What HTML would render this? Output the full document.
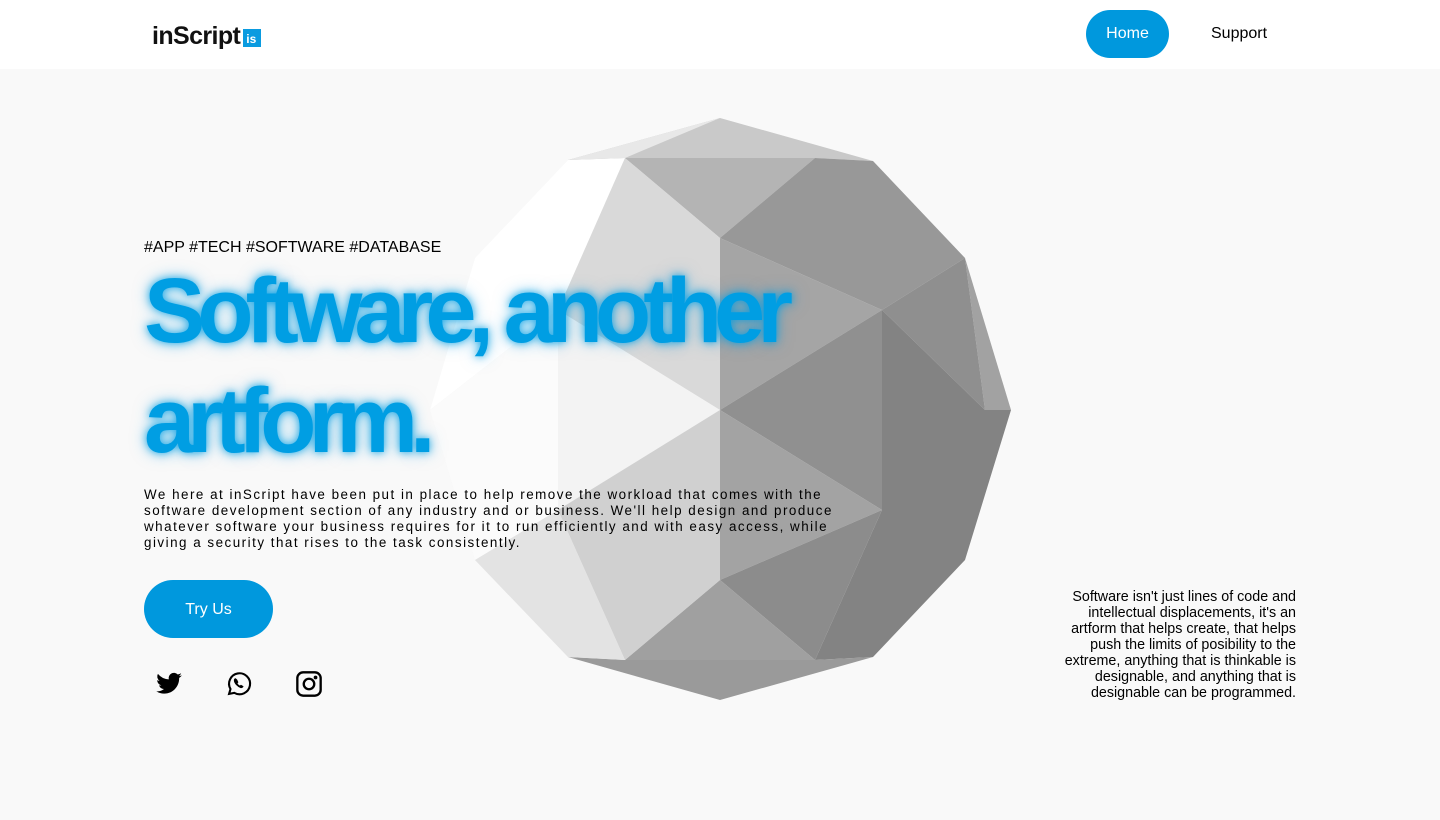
<!DOCTYPE html>
<html><head><meta charset="utf-8"><style>
*{margin:0;padding:0;box-sizing:border-box}
body{width:1440px;height:820px;background:#f9f9f9;font-family:"Liberation Sans",Arial,sans-serif;position:relative;overflow:hidden}
header{position:absolute;top:0;left:0;width:1440px;height:69px;background:#fff}
.logo{position:absolute;left:152px;top:22px;font-weight:bold;font-size:25px;letter-spacing:-0.6px;color:#111;font-family:"Liberation Sans",sans-serif}
.logo .is{display:inline-block;background:#0a9be0;color:#fff;font-size:12px;padding:0 3px;width:18px;height:18px;line-height:20px;vertical-align:1px;margin-left:3px;letter-spacing:0}
.home{position:absolute;left:1086px;top:10px;width:83px;height:48px;border-radius:24px;background:#0098dd;color:#fff;font-size:16px;text-align:center;line-height:48px}
.sup{position:absolute;left:1211px;top:25px;font-size:16px;color:#000}
svg.poly{position:absolute;left:0;top:0}
.tags{position:absolute;left:144px;top:239px;font-size:16px;color:#000}
h1{position:absolute;left:144px;top:256px;font-size:92px;line-height:110px;font-weight:bold;color:#009ee3;letter-spacing:-8px;text-shadow:0 0 8px rgba(0,158,227,.8),0 0 16px rgba(0,158,227,.5)}
.desc{position:absolute;left:144px;top:487px;width:700px;font-size:13.4px;line-height:16px;letter-spacing:1.5px;color:#000}
.try{position:absolute;left:144px;top:580px;width:129px;height:58px;border-radius:29px;background:#0098dd;color:#fff;font-size:16px;text-align:center;line-height:59px}
.side{position:absolute;left:1060px;top:589px;width:236px;text-align:right;font-size:14.3px;line-height:16px;color:#000}
.ic{position:absolute;top:670px}
</style></head><body>
<svg class="poly" width="1440" height="820">
<polygon points="720,118 873,161 965,258 1011,410 965,560 873,657 720,700 568,657 475,560 430,410 475,258 568,160" fill="#f0f0f0"/>
<polygon points="568,160 625,158 558,310 430,410 475,258" fill="#fff"/>
<polygon points="430,410 558,310 558,510 475,560" fill="#fbfbfb"/>
<polygon points="720,118 873,161 815,158 625,158 568,160" fill="#c9c9c9"/>
<polygon points="720,118 625,158 568,160" fill="#e8e8e8"/>
<polygon points="625,158 815,158 720,238" fill="#b4b4b4"/>
<polygon points="625,158 720,238 720,410 558,310" fill="#d9d9d9"/>
<polygon points="558,310 720,410 558,510" fill="#f3f3f3"/>
<polygon points="815,158 873,161 965,258 882,310 720,238" fill="#989898"/>
<polygon points="965,258 1011,410 985,410" fill="#a2a2a2"/>
<polygon points="965,258 985,410 882,310" fill="#8f8f8f"/>
<polygon points="720,238 882,310 720,410" fill="#a5a5a5"/>
<polygon points="720,410 882,310 882,510" fill="#909090"/>
<polygon points="882,310 985,410 1011,410 965,560 873,657 815,660 882,510" fill="#838383"/>
<polygon points="720,410 882,510 720,580" fill="#a3a3a3"/>
<polygon points="720,580 882,510 815,660" fill="#8c8c8c"/>
<polygon points="720,580 815,660 625,660" fill="#a0a0a0"/>
<polygon points="625,660 815,660 873,657 720,700 568,657" fill="#9a9a9a"/>
<polygon points="558,510 720,410 720,580 625,660" fill="#d0d0d0"/>
<polygon points="475,560 558,510 625,660 568,657" fill="#e3e3e3"/>
</svg>
<header><div class="logo">inScript<span class="is">is</span></div><div class="home">Home</div><div class="sup">Support</div></header>
<div class="tags">#APP #TECH #SOFTWARE #DATABASE</div>
<h1>Software, another<br>artform.</h1>
<div class="desc">We here at inScript have been put in place to help remove the workload that comes with the software development section of any industry and or business. We'll help design and produce whatever software your business requires for it to run efficiently and with easy access, while giving a security that rises to the task consistently.</div>
<div class="try">Try Us</div>
<svg class="ic" style="left:153px" width="32" height="28" viewBox="0 0 24 24"><path d="M23 4.6c-.8.4-1.7.6-2.6.7.9-.6 1.6-1.4 2-2.5-.9.5-1.9.9-2.9 1.1A4.5 4.5 0 0 0 11.8 8 12.8 12.8 0 0 1 2.5 3.3a4.5 4.5 0 0 0 1.4 6c-.7 0-1.4-.2-2-.6 0 2.2 1.5 4 3.6 4.4-.7.2-1.4.2-2 .1.6 1.800 2.2 3.1 4.2 3.1A9 9 0 0 1 1 18.2 12.8 12.8 0 0 0 7.9 20.2c8.3 0 12.8-6.9 12.8-12.8v-.6c.9-.6 1.7-1.4 2.300-2.2z" fill="#000"/></svg>
<svg class="ic" style="left:225px" width="28" height="28" viewBox="0 0 24 24" fill="none" stroke="#000" stroke-width="1.8"><path d="M3.5 20.5l1.2-4.2A9 9 0 1 1 8 19.6z"/><path d="M9 7.5c-.5 0-1 .6-1 1.3 0 2.5 3 5.6 5.6 6.3.8.2 1.6-.4 1.8-1l-1.7-1-1 .8c-1-.5-2-1.4-2.5-2.5l.8-1-.9-1.9z" fill="#000" stroke-width=".8"/></svg>
<svg class="ic" style="left:295px" width="28" height="28" viewBox="0 0 24 24" fill="none" stroke="#000" stroke-width="2"><rect x="2" y="2" width="20" height="20" rx="5"/><circle cx="12" cy="12" r="4.5"/><circle cx="17.6" cy="6.4" r=".6" fill="#000"/></svg>
<div class="side">Software isn't just lines of code and intellectual displacements, it's an artform that helps create, that helps push the limits of posibility to the extreme, anything that is thinkable is designable, and anything that is designable can be programmed.</div>
</body></html>
